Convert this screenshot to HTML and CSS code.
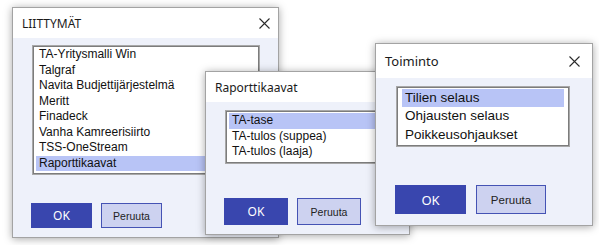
FILE: index.html
```html
<!DOCTYPE html>
<html lang="fi">
<head>
    <meta charset="UTF-8">
    <meta name="viewport" content="width=device-width, initial-scale=1.0">
    <title>Liittymät</title>
    <link rel="stylesheet" href="styles.css">
</head>
<body>
    <div class="desktop">
        <div class="window win-liittymat">
            <div class="titlebar">
                <span class="title">LIITTYMÄT</span>
                <svg class="close" viewBox="0 0 11 11"><path d="M0.5 0.5L10.5 10.5M10.5 0.5L0.5 10.5"/></svg>
            </div>
            <div class="content">
                <ul class="listbox">
                    <li class="item">TA-Yritysmalli Win</li>
                    <li class="item">Talgraf</li>
                    <li class="item">Navita Budjettijärjestelmä</li>
                    <li class="item">Meritt</li>
                    <li class="item">Finadeck</li>
                    <li class="item">Vanha Kamreerisiirto</li>
                    <li class="item">TSS-OneStream</li>
                    <li class="item selected">Raporttikaavat</li>
                </ul>
                <div class="buttons">
                    <button class="btn btn-ok">OK</button>
                    <button class="btn btn-cancel">Peruuta</button>
                </div>
            </div>
        </div>

        <div class="window win-raportti">
            <div class="titlebar">
                <span class="title">Raporttikaavat</span>
            </div>
            <div class="content">
                <ul class="listbox">
                    <li class="item selected">TA-tase</li>
                    <li class="item">TA-tulos (suppea)</li>
                    <li class="item">TA-tulos (laaja)</li>
                </ul>
                <div class="buttons">
                    <button class="btn btn-ok">OK</button>
                    <button class="btn btn-cancel">Peruuta</button>
                </div>
            </div>
        </div>

        <div class="window win-toiminto">
            <div class="titlebar">
                <span class="title">Toiminto</span>
                <svg class="close" viewBox="0 0 11 11"><path d="M0.5 0.5L10.5 10.5M10.5 0.5L0.5 10.5"/></svg>
            </div>
            <div class="content">
                <ul class="listbox">
                    <li class="item selected">Tilien selaus</li>
                    <li class="item">Ohjausten selaus</li>
                    <li class="item">Poikkeusohjaukset</li>
                </ul>
                <div class="buttons">
                    <button class="btn btn-ok">OK</button>
                    <button class="btn btn-cancel">Peruuta</button>
                </div>
            </div>
        </div>
    </div>
</body>
</html>
```

FILE: styles.css
```css
body {
    margin: 0;
    background: #ffffff;
    font-family: "Liberation Sans", Arial, sans-serif;
}

.desktop {
    position: relative;
    width: 599px;
    height: 245px;
    overflow: hidden;
}

/* windows sit on the desktop at their own places */
.window {
    position: absolute;
    box-sizing: border-box;
    display: flex;
    flex-direction: column;
    background: #eef1fa;
    border: 1px solid #a3a3a3;
    box-shadow: 0 1px 8px rgba(0, 0, 0, 0.35);
}

.win-liittymat {
    left: 12px;
    top: 7px;
    width: 267px;
    height: 231px;
}

.win-raportti {
    left: 205px;
    top: 71px;
    width: 205px;
    height: 164px;
}

.win-toiminto {
    left: 375px;
    top: 43px;
    width: 218px;
    height: 183px;
}

.titlebar {
    display: flex;
    align-items: center;
    justify-content: space-between;
    height: 30px;
    padding: 0 8px 0 9px;
    background: #ffffff;
    font-family: "Noto Sans", "Open Sans", sans-serif;
    font-size: 12px;
    color: #1a1a1a;
}

.win-toiminto .titlebar {
    height: 34px;
    padding: 0 12px 0 9px;
    font-size: 13px;
}

.close {
    width: 11px;
    height: 11px;
    stroke: #2b2b2b;
    stroke-width: 1.1;
    fill: none;
}

.content {
    display: flex;
    flex-direction: column;
    padding: 7px 0 0 19px;
}

.listbox {
    list-style: none;
    margin: 0;
    padding: 1px 3px;
    box-sizing: border-box;
    width: 228px;
    height: 130px;
    background: #ffffff;
    border: 1px solid #a8a8a8;
    box-shadow: inset 0 0 0 1px #7c7c7c;
    font-size: 12px;
    color: #111111;
}

.item {
    line-height: 15.5px;
    height: 15.5px;
    padding-left: 3px;
    white-space: nowrap;
}

.item.selected {
    background: #b8c4f6;
}

.buttons {
    display: flex;
    gap: 9px;
    margin-top: 28px;
    margin-left: -1px;
}

.btn {
    box-sizing: border-box;
    width: 61px;
    height: 25px;
    padding: 0;
    font-family: "Noto Sans", "Open Sans", sans-serif;
    font-size: 12px;
    cursor: pointer;
}

.btn-ok {
    background: #3946ae;
    border: 1px solid #3946ae;
    color: #ffffff;
}

.btn-cancel {
    background: #cdd2f0;
    border: 1px solid #4553b4;
    color: #222222;
    font-family: "Liberation Sans", Arial, sans-serif;
    font-size: 10.5px;
}

/* Raporttikaavat */
.win-raportti .content {
    padding-top: 8px;
}

.win-raportti .listbox {
    width: 200px;
    height: 54px;
    padding-top: 2px;
}

.win-raportti .item {
    line-height: 15.7px;
    height: 15.7px;
}

.win-raportti .buttons {
    margin-top: 34px;
}

.win-raportti .btn {
    width: 64px;
    height: 27px;
}

/* Toiminto */
.win-toiminto .content {
    padding: 8px 0 0 20px;
}

.win-toiminto .listbox {
    width: 174px;
    height: 61px;
    padding: 2px 5px;
    font-size: 13.5px;
}

.win-toiminto .item {
    line-height: 18.3px;
    height: 18.3px;
}

.win-toiminto .buttons {
    gap: 10px;
    margin-top: 38px;
}

.win-toiminto .btn {
    width: 71px;
    height: 29px;
    font-size: 13px;
}

.win-toiminto .btn-cancel {
    width: 70px;
    font-size: 11.5px;
}
```
